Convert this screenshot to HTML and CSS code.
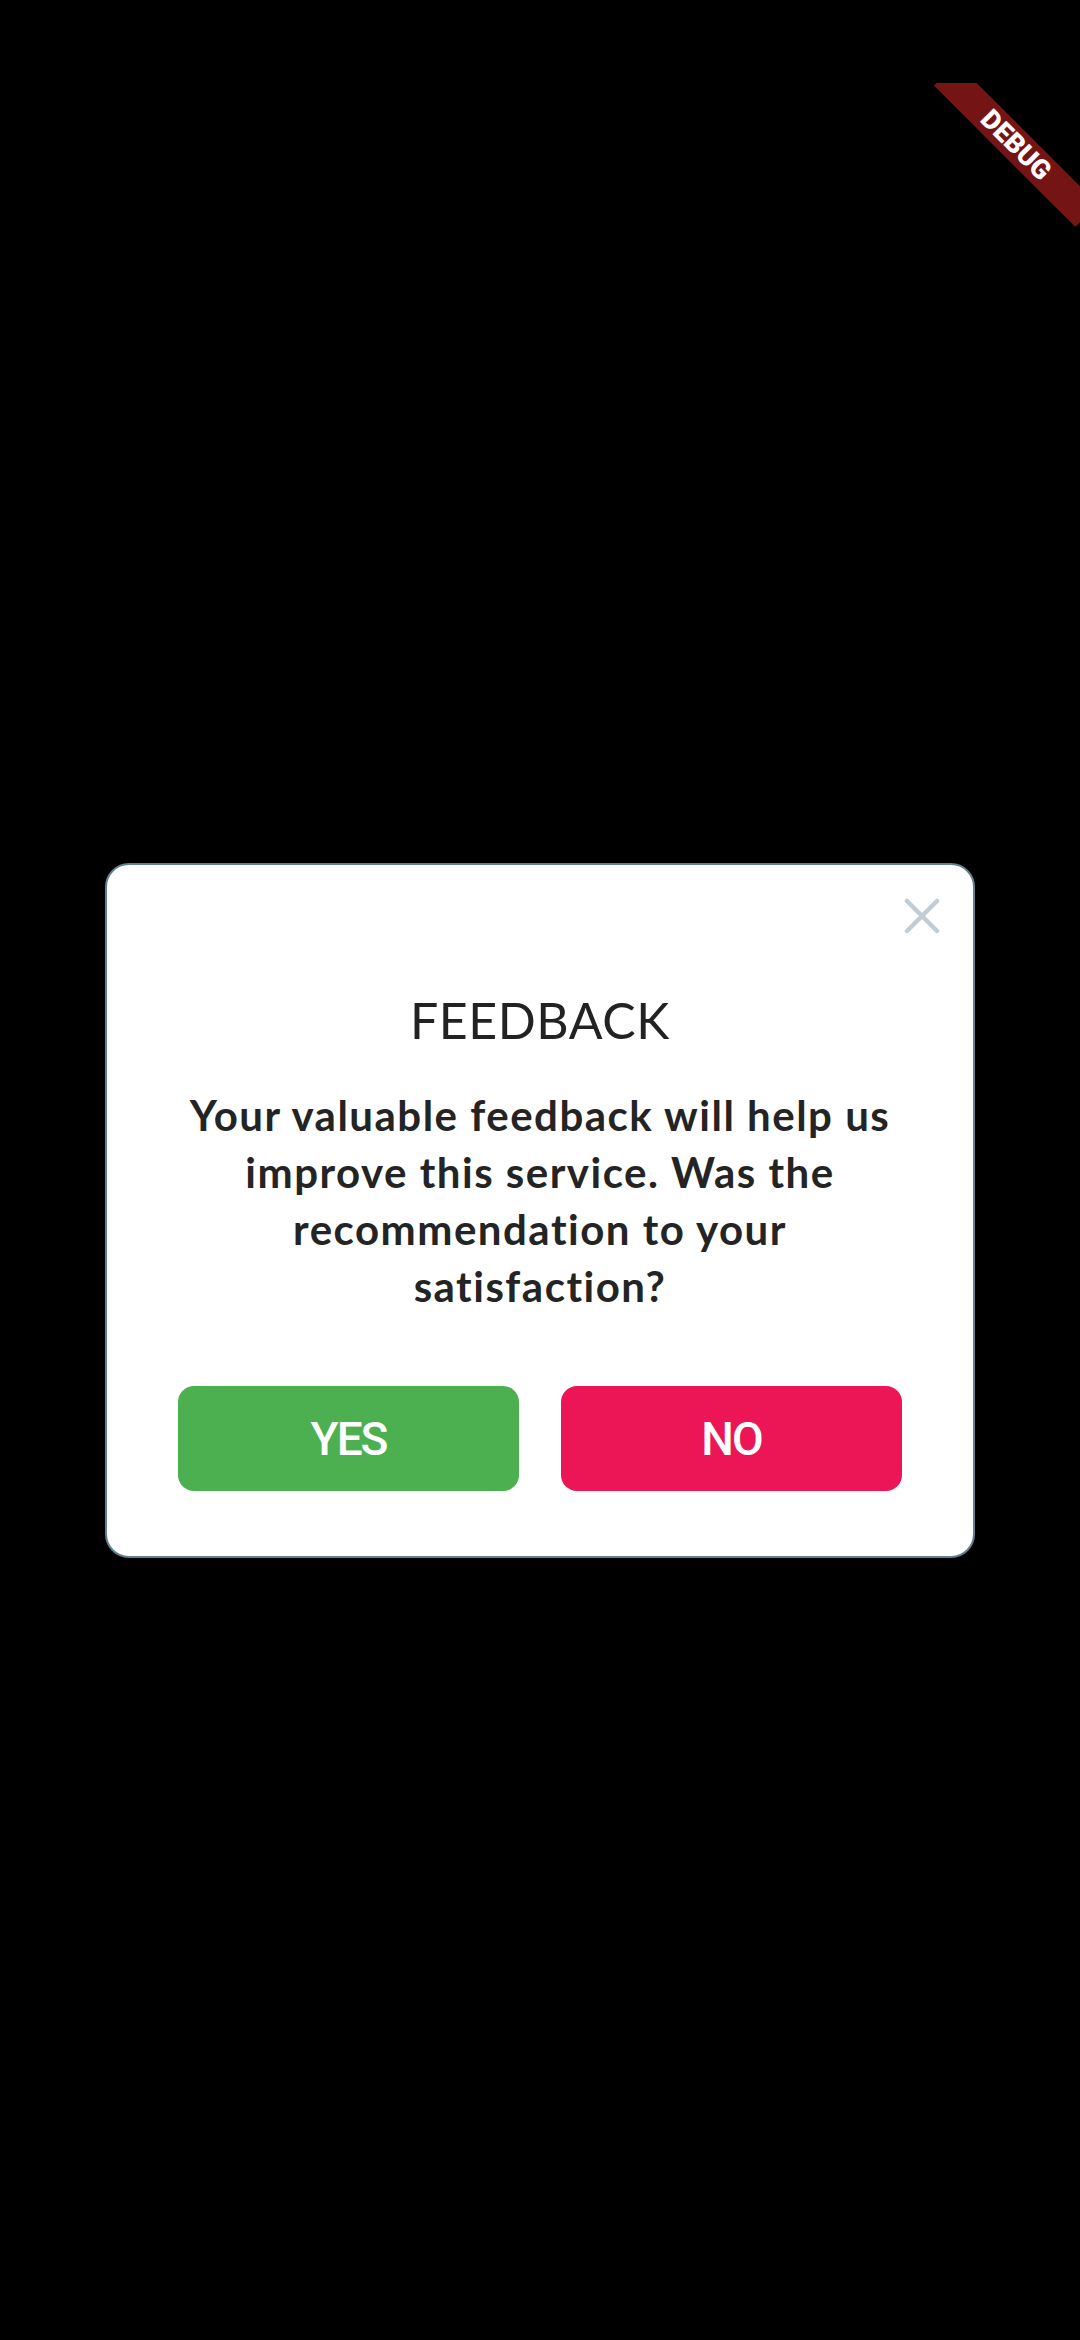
FILE: index.html
```html
<!DOCTYPE html>
<html lang="en">
<head>
<meta charset="utf-8">
<title>Feedback</title>
<link rel="stylesheet" href="styles.css">
</head>
<body>
<div class="screen">
  <div class="dialog">
    <div class="close-row">
      <button class="close" aria-label="Close">
        <svg width="36" height="36" viewBox="0 0 36 36"><path d="M3 3 L33 33 M33 3 L3 33" stroke="#c3ccd4" stroke-width="4.5" stroke-linecap="round" fill="none"/></svg>
      </button>
    </div>
    <h1 class="title">FEEDBACK</h1>
    <p class="message">Your valuable feedback will help us<br>improve this service. Was the<br>recommendation to your<br>satisfaction?</p>
    <div class="actions">
      <button class="btn btn-yes">YES</button>
      <button class="btn btn-no">NO</button>
    </div>
  </div>
</div>
<div class="debug-banner"><div class="debug-band">DEBUG</div></div>
</body>
</html>
```

FILE: styles.css
```css
html, body {
  margin: 0;
  padding: 0;
  background: #000;
}
body {
  width: 1080px;
  height: 2340px;
  position: relative;
  overflow: hidden;
  font-family: Lato, "Noto Sans", sans-serif;
}
.screen {
  padding-top: 863px;
}
.dialog {
  margin: 0 105px;
  background: #fff;
  border: 2px solid #62818f;
  border-radius: 24px;
  padding: 33px 71px 65px;
  display: flex;
  flex-direction: column;
  align-items: center;
}
.close-row {
  align-self: stretch;
  display: flex;
  justify-content: flex-end;
  margin-right: -38px;
}
.close {
  width: 36px;
  height: 36px;
  padding: 0;
  border: 0;
  background: none;
  display: block;
}
.close svg { display: block; }
.title {
  margin: 56px 0 0;
  font-family: Lato, sans-serif;
  font-weight: 400;
  font-size: 50px;
  line-height: 60px;
  color: #222;
  letter-spacing: 0.6px;
}
.message {
  margin: 37px 0 0;
  font-family: Lato, sans-serif;
  font-weight: 700;
  font-size: 42px;
  line-height: 57px;
  letter-spacing: 1.5px;
  color: #242424;
  text-align: center;
}
.actions {
  align-self: stretch;
  display: flex;
  gap: 42px;
  margin-top: 71px;
}
.btn {
  flex: 1;
  height: 105px;
  border: 0;
  border-radius: 16px;
  color: #fff;
  font-family: Roboto, sans-serif;
  font-weight: 500;
  font-size: 46px;
  letter-spacing: -2px;
  display: flex;
  align-items: center;
  justify-content: center;
  padding: 0;
}
.btn-yes { background: #4caf50; }
.btn-no { background: #ec1656; }
.debug-banner {
  position: absolute;
  top: 83px;
  right: 0;
  width: 148px;
  height: 148px;
  overflow: hidden;
}
.debug-band {
  position: absolute;
  left: -16px;
  top: 45.5px;
  width: 200px;
  height: 32px;
  background: #751414;
  transform: rotate(45deg);
  color: #fff;
  font-family: Roboto, sans-serif;
  font-weight: 900;
  font-size: 27px;
  line-height: 32px;
  text-align: center;
}
```
